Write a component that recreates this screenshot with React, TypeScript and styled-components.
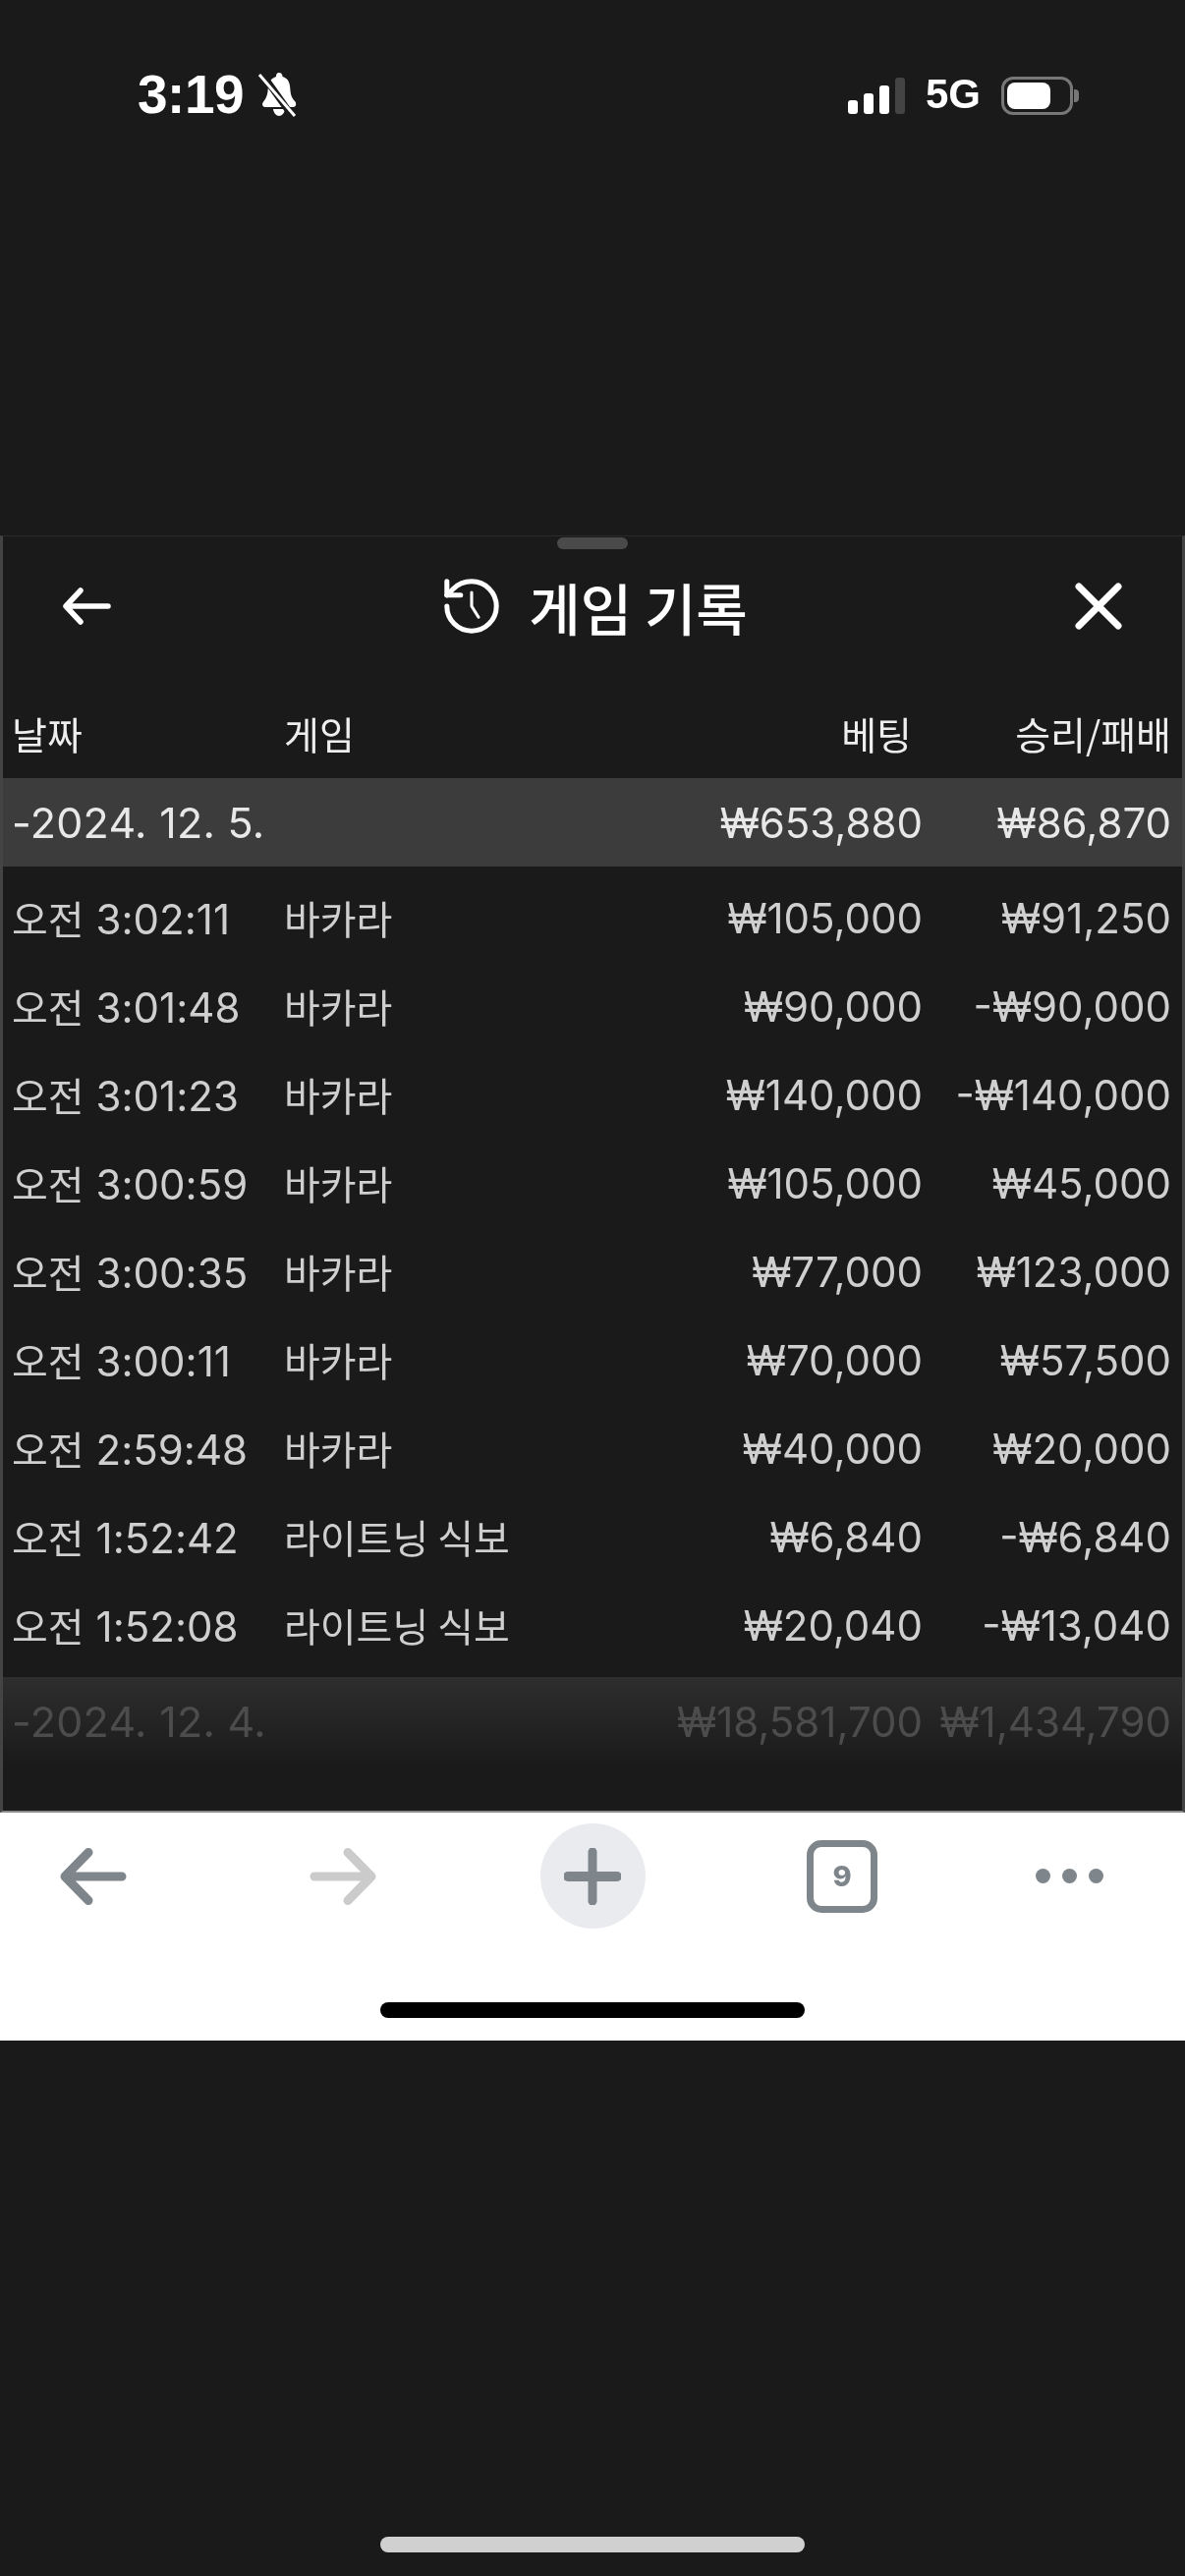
import React from "react";
import styled, { createGlobalStyle } from "styled-components";

const Global = createGlobalStyle`
  html, body { margin: 0; padding: 0; background: #1a1a1a; }
  * { box-sizing: border-box; }
`;

const Page = styled.div`
  width: 1206px;
  height: 2622px;
  display: flex;
  flex-direction: column;
  background: #1a1a1a;
  font-family: Inter, "Noto Sans CJK KR", sans-serif;
  overflow: hidden;
  filter: blur(0.5px);
`;

const StatusBar = styled.div`
  height: 545px;
  flex: none;
  padding: 74px 114px 0 140px;
  display: flex;
  justify-content: space-between;
  align-items: flex-start;
  color: #fff;
  font-family: "Liberation Sans", sans-serif;
  font-weight: 700;
`;

const StatusGroup = styled.div`
  display: flex;
  align-items: center;
  height: 44px;
`;

const Clock = styled.span`
  font-size: 55px;
  line-height: 44px;
  letter-spacing: -0.5px;
  margin-right: 14px;
`;

const SignalBars = styled.div`
  display: flex;
  align-items: flex-end;
  gap: 6px;
  height: 37px;
  margin-top: 3px;
  margin-right: 21px;
`;

const SignalBar = styled.div<{ $h: number; $off?: boolean }>`
  width: 10px;
  height: ${(p) => p.$h}px;
  border-radius: 3px;
  background: ${(p) => (p.$off ? "#444" : "#fff")};
`;

const Network = styled.span`
  font-size: 42px;
  line-height: 44px;
  margin-right: 21px;
`;

const Battery = styled.div`
  position: relative;
  width: 73px;
  height: 39px;
  margin-top: 3px;
  border: 3px solid #777;
  border-radius: 12px;
  padding: 3px;
  &::after {
    content: "";
    position: absolute;
    right: -9px;
    top: 10px;
    width: 5px;
    height: 13px;
    border-radius: 0 4px 4px 0;
    background: #777;
  }
`;

const BatteryFill = styled.div`
  width: 44px;
  height: 100%;
  border-radius: 8px;
  background: #fff;
`;

const Sheet = styled.section`
  flex: none;
  height: 1300px;
  display: flex;
  flex-direction: column;
  background: #1a1a1a;
  border-left: 3px solid #444;
  border-right: 3px solid #444;
  border-top: 1px solid #2a2a2a;
  border-bottom: 2px solid #8a8a8a;
`;

const Handle = styled.div`
  flex: none;
  width: 72px;
  height: 12px;
  margin: 1px auto 0;
  border-radius: 6px;
  background: #4a4a4a;
`;

const SheetHeader = styled.header`
  flex: none;
  height: 144px;
  padding: 0 61px 28px 60px;
  display: flex;
  align-items: center;
  justify-content: space-between;
  color: #fff;
`;

const SheetTitle = styled.div`
  display: flex;
  align-items: center;
  gap: 30px;
  margin-left: 6px;
`;

const TitleText = styled.h1`
  margin: 0;
  font-family: "Noto Sans CJK KR", sans-serif;
  font-size: 57px;
  line-height: 64px;
  font-weight: 500;
`;

const Grid = styled.div<{ $h: number }>`
  flex: none;
  height: ${(p) => p.$h}px;
  display: grid;
  grid-template-columns: 277px 200px 1fr 253px;
  align-items: center;
  padding: 0 11px 0 9px;
`;

const ColumnHead = styled(Grid)`
  color: #eeeeee;
  font-size: 39px;
  font-weight: 400;
  font-family: "Noto Sans CJK KR", sans-serif;
  padding-bottom: 3px;
`;

const DayRow = styled(Grid)`
  background: #3c3c3c;
  color: #e8e8e8;
  font-size: 42px;
  font-weight: 400;
  margin-bottom: 8px;
`;

const FadedDayRow = styled(Grid)`
  margin-top: 7px;
  background: linear-gradient(#2e2e2e, #1a1a1a);
  color: #4c4c4c;
  font-size: 42px;
  font-weight: 400;
`;

const GameRow = styled(Grid)`
  color: #cfcfcf;
  font-size: 42px;
  font-weight: 400;
  padding-bottom: 2px;
`;

const Cell = styled.div`
  white-space: nowrap;
`;

const DateCell = styled(Cell)`
  font-size: 43px;
  letter-spacing: 0.3px;
`;

const GameName = styled(Cell)`
  font-family: "Noto Sans CJK KR", sans-serif;
  font-size: 40px;
  font-weight: 400;
`;

const TimeCell = styled(GameName)`
  word-spacing: 3px;
`;

const ClockDigits = styled.span`
  font-family: Inter, sans-serif;
  font-size: 42px;
  font-weight: 400;
`;

const Money = styled(Cell)`
  text-align: right;
`;

const HeadRight = styled(Cell)<{ $inset?: boolean }>`
  text-align: right;
  padding-right: ${(p) => (p.$inset ? 11 : 0)}px;
`;

const Toolbar = styled.nav`
  flex: none;
  height: 232px;
  background: #fff;
  display: flex;
  flex-direction: column;
  align-items: center;
`;

const ToolIcons = styled.div`
  width: 100%;
  height: 123px;
  padding-top: 6px;
  display: grid;
  grid-template-columns: 190px 318px 190px 318px 144px;
  justify-items: center;
  align-items: center;
`;

const PlusCircle = styled.div`
  width: 107px;
  height: 107px;
  border-radius: 50%;
  background: #e9ebee;
  display: flex;
  align-items: center;
  justify-content: center;
`;

const TabCount = styled.div`
  width: 72px;
  height: 74px;
  border: 7px solid #7e868b;
  border-radius: 15px;
  display: flex;
  align-items: center;
  justify-content: center;
  color: #7e868b;
  font-family: Inter, sans-serif;
  font-weight: 800;
  font-size: 29px;
`;

const Dots = styled.div`
  display: flex;
  gap: 12px;
`;

const Dot = styled.span`
  width: 15px;
  height: 15px;
  border-radius: 50%;
  background: #7e868b;
`;

const HomeBar = styled.div<{ $light?: boolean }>`
  flex: none;
  width: 432px;
  height: 16px;
  border-radius: 8px;
  background: ${(p) => (p.$light ? "#d0d0d0" : "#000")};
`;

const ToolHome = styled(HomeBar)`
  margin-top: 70px;
`;

const Footer = styled.div`
  flex: 1;
  display: flex;
  align-items: flex-start;
  justify-content: center;
  padding-top: 505px;
`;

const BellOff = () => (
  <svg width="44" height="46" viewBox="0 0 42 46">
    <path d="M21 1c2.500 0 3.500 2 3.500 4 5.500 1.500 7.500 6 7.800 12 .3 5 1 9 4.700 13 2 2 1.500 6-1.500 6H7c-3 0-4-3.500-1.500-6 3-3.500 4-8 4.300-13C10 11 13 6.500 18 5c0-2 .5-4 3-4z" fill="#fff" />
    <path d="M15 38h12c-.5 4-3 7-6 7s-5.500-3-6-7z" fill="#fff" />
    <path d="M5 4l30 42" stroke="#1a1a1a" strokeWidth="7" fill="none" />
    <path d="M1 3l36 42" stroke="#fff" strokeWidth="3" fill="none" />
  </svg>
);

const HeaderBack = () => (
  <svg width="50" height="38" viewBox="0 0 50 38" fill="none" stroke="#fff" strokeWidth="5.500" strokeLinecap="round" strokeLinejoin="round">
    <path d="M47 19H5M19 3L4 19l15 16" />
  </svg>
);

const HistoryIcon = () => (
  <svg width="56" height="56" viewBox="2 2 20 20" fill="none" stroke="#fff" strokeWidth="1.800" strokeLinecap="round" strokeLinejoin="round">
    <path d="M3 12a9 9 0 1 0 9-9 9.750 9.750 0 0 0-6.740 2.740L3 8" />
    <path d="M3 3v5h5" />
    <path d="M12 7v5l2.500 4" strokeWidth="1.100" />
  </svg>
);

const CloseIcon = () => (
  <svg width="48" height="48" viewBox="0 0 48 48" fill="none" stroke="#fff" strokeWidth="7" strokeLinecap="round">
    <path d="M4 4l40 40M44 4L4 44" />
  </svg>
);

const ToolArrow = ({ color, flip }: { color: string; flip?: boolean }) => (
  <svg width="68" height="58" viewBox="0 0 68 58" fill="none" stroke={color} strokeWidth="9" strokeLinecap="round" strokeLinejoin="round" style={flip ? { transform: "scaleX(-1)" } : undefined}>
    <path d="M63 29H6M29 4.500L5 29l24 24.500" />
  </svg>
);

const PlusIcon = () => (
  <svg width="58" height="58" viewBox="0 0 58 58" fill="none" stroke="#7e868b" strokeLinecap="round">
    <path d="M29 4v50" strokeWidth="9" />
    <path d="M4 29h50" strokeWidth="10" />
  </svg>
);

const rows: [string, string, string, string][] = [
  ["3:02:11", "바카라", "₩105,000", "₩91,250"],
  ["3:01:48", "바카라", "₩90,000", "-₩90,000"],
  ["3:01:23", "바카라", "₩140,000", "-₩140,000"],
  ["3:00:59", "바카라", "₩105,000", "₩45,000"],
  ["3:00:35", "바카라", "₩77,000", "₩123,000"],
  ["3:00:11", "바카라", "₩70,000", "₩57,500"],
  ["2:59:48", "바카라", "₩40,000", "₩20,000"],
  ["1:52:42", "라이트닝 식보", "₩6,840", "-₩6,840"],
  ["1:52:08", "라이트닝 식보", "₩20,040", "-₩13,040"],
];

export default function App() {
  return (
    <Page>
      <Global />
      <StatusBar>
        <StatusGroup>
          <Clock>3:19</Clock>
          <BellOff />
        </StatusGroup>
        <StatusGroup>
          <SignalBars>
            <SignalBar $h={14} />
            <SignalBar $h={21} />
            <SignalBar $h={29} />
            <SignalBar $h={37} $off />
          </SignalBars>
          <Network>5G</Network>
          <Battery>
            <BatteryFill />
          </Battery>
        </StatusGroup>
      </StatusBar>
      <Sheet>
        <Handle />
        <SheetHeader>
          <HeaderBack />
          <SheetTitle>
            <HistoryIcon />
            <TitleText>게임 기록</TitleText>
          </SheetTitle>
          <CloseIcon />
        </SheetHeader>
        <ColumnHead $h={89}>
          <Cell>날짜</Cell>
          <Cell>게임</Cell>
          <HeadRight $inset>베팅</HeadRight>
          <HeadRight>승리/패배</HeadRight>
        </ColumnHead>
        <DayRow $h={90}>
          <DateCell>-2024. 12. 5.</DateCell>
          <Cell />
          <Money>₩653,880</Money>
          <Money>₩86,870</Money>
        </DayRow>
        {rows.map((r) => (
          <GameRow $h={90} key={r[0]}>
            <TimeCell>
              오전 <ClockDigits>{r[0]}</ClockDigits>
            </TimeCell>
            <GameName>{r[1]}</GameName>
            <Money>{r[2]}</Money>
            <Money>{r[3]}</Money>
          </GameRow>
        ))}
        <FadedDayRow $h={90}>
          <DateCell>-2024. 12. 4.</DateCell>
          <Cell />
          <Money>₩18,581,700</Money>
          <Money>₩1,434,790</Money>
        </FadedDayRow>
      </Sheet>
      <Toolbar>
        <ToolIcons>
          <ToolArrow color="#7e868b" />
          <ToolArrow color="#cbcbcb" flip />
          <PlusCircle>
            <PlusIcon />
          </PlusCircle>
          <TabCount>9</TabCount>
          <Dots>
            <Dot />
            <Dot />
            <Dot />
          </Dots>
        </ToolIcons>
        <ToolHome />
      </Toolbar>
      <Footer>
        <HomeBar $light />
      </Footer>
    </Page>
  );
}
